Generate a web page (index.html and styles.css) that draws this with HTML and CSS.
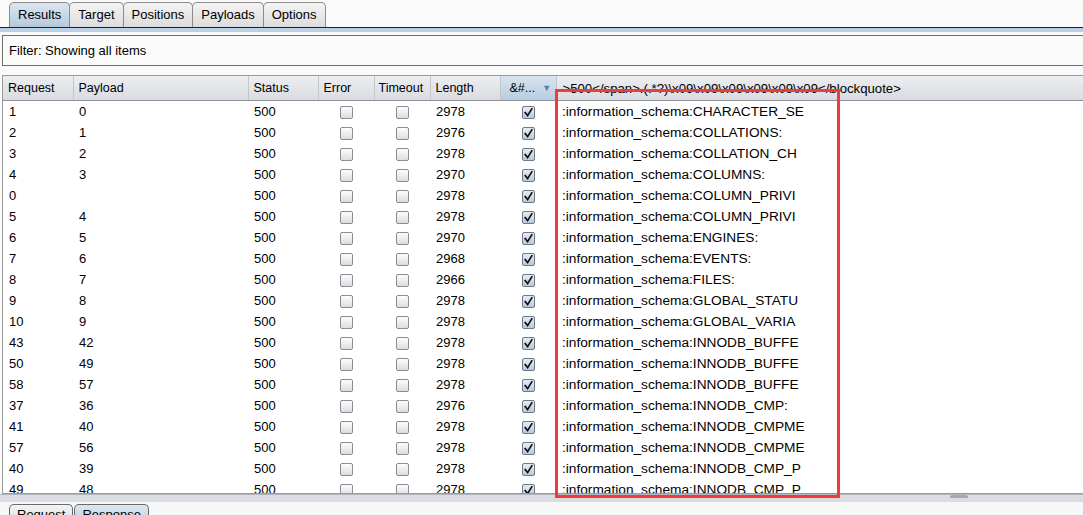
FILE: index.html
```html
<!DOCTYPE html>
<html>
<head>
<meta charset="utf-8">
<link rel="stylesheet" href="styles.css">
</head>
<body>
<div class="page">
  <div class="tabs">
    <div class="tab active">Results</div>
    <div class="tab">Target</div>
    <div class="tab">Positions</div>
    <div class="tab">Payloads</div>
    <div class="tab">Options</div>
  </div>
  <div class="band"></div>
  <div class="filter">Filter: Showing all items</div>
  <div class="table-wrap">
    <table class="grid">
      <colgroup>
        <col class="c-req"><col class="c-pay"><col class="c-status"><col class="c-err"><col class="c-to"><col class="c-len"><col class="c-ext"><col class="c-last">
      </colgroup>
      <thead>
        <tr>
          <th>Request</th><th>Payload</th><th>Status</th><th>Error</th><th class="to">Timeout</th><th>Length</th>
          <th class="sorted"><span>&amp;#...</span><span class="tri">&#9660;</span></th>
          <th class="last">&gt;500&lt;/span&gt;.(.*?)\x09\x09\x09\x09\x09\x09&lt;/blockquote&gt;</th>
        </tr>
      </thead>
      <tbody id="rows"></tbody>
    </table>
  </div>
  <div class="splitter"><div class="handle"></div></div>
  <div class="btabs">
    <div class="btab">Request</div>
    <div class="btab active">Response</div>
  </div>
  <div class="redbox"></div>
</div>
<script src="script.js"></script>
</body>
</html>
```

FILE: script.js
```js
var data = [
  ["1","0","2978","CHARACTER_SE"],
  ["2","1","2976","COLLATIONS:"],
  ["3","2","2978","COLLATION_CH"],
  ["4","3","2970","COLUMNS:"],
  ["0","","2978","COLUMN_PRIVI"],
  ["5","4","2978","COLUMN_PRIVI"],
  ["6","5","2970","ENGINES:"],
  ["7","6","2968","EVENTS:"],
  ["8","7","2966","FILES:"],
  ["9","8","2978","GLOBAL_STATU"],
  ["10","9","2978","GLOBAL_VARIA"],
  ["43","42","2978","INNODB_BUFFE"],
  ["50","49","2978","INNODB_BUFFE"],
  ["58","57","2978","INNODB_BUFFE"],
  ["37","36","2976","INNODB_CMP:"],
  ["41","40","2978","INNODB_CMPME"],
  ["57","56","2978","INNODB_CMPME"],
  ["40","39","2978","INNODB_CMP_P"],
  ["49","48","2978","INNODB_CMP_P"]
];
var box = '<span class="cb"></span>';
var chk = '<span class="cb on"><svg viewBox="0 0 13 13" width="13" height="13"><path d="M3.2 6.6 L5.6 9.6 L9.8 2.8" fill="none" stroke="#111" stroke-width="1.7" stroke-linecap="square"/></svg></span>';
var html = "";
data.forEach(function (r) {
  html += "<tr><td>" + r[0] + "</td><td>" + r[1] + "</td><td>500</td><td class='ctr'>" + box +
    "</td><td class='ctr'>" + box + "</td><td>" + r[2] + "</td><td class='ctr'>" + chk +
    "</td><td class='last'>:information_schema:" + r[3] + "</td></tr>";
});
document.getElementById("rows").innerHTML = html;
```

FILE: styles.css
```css
html, body {
  margin: 0;
  padding: 0;
  background: #fafafa;
  overflow: hidden;
}
.page {
  position: relative;
  width: 1083px;
  height: 515px;
  overflow: hidden;
  font-family: "Liberation Sans", Arial, sans-serif;
  font-size: 12px;
  color: #000;
}
.tabs {
  display: flex;
  height: 25px;
  padding: 2px 0 0 9px;
  border-bottom: 1px solid #222;
}
.tab {
  height: 24px;
  line-height: 24px;
  padding: 0 8px;
  border: 1px solid #8c8c8c;
  border-bottom: none;
  border-radius: 5px 5px 0 0;
  background: linear-gradient(#f4f4f4, #dcdcde);
  font-size: 13px;
  margin-right: -1px;
}
.tab.active {
  background: linear-gradient(#dce6f0, #b6cadc);
  padding: 0 8px;
}
.band {
  height: 4px;
  background: #bcd0e3;
}
.filter {
  margin: 3px 0 0 2px;
  height: 29px;
  line-height: 29px;
  border: 1px solid #6e6e6e;
  border-right: none;
  padding-left: 6px;
  background: #fbfbfb;
  font-size: 13px;
}
.table-wrap {
  margin: 9px 0 0 2px;
  height: 417px;
  border: 1px solid #999;
  border-right: none;
  overflow: hidden;
  background: #fff;
}
.grid {
  table-layout: fixed;
  border-collapse: collapse;
  width: 1640px;
}
.c-req { width: 70px; }
.c-pay { width: 175px; }
.c-status { width: 70px; }
.c-err { width: 56px; }
.c-to { width: 56px; }
.c-len { width: 70px; }
.c-ext { width: 56px; }
.c-last { width: 1087px; }
th {
  height: 24px;
  padding: 0 0 0 5px;
  text-align: left;
  font-weight: normal;
  font-size: 12.5px;
  white-space: nowrap;
  overflow: hidden;
  background: linear-gradient(#eceef1, #d9dbe0);
  border-right: 1px solid #c3c5cb;
  border-bottom: 1px solid #8f9098;
}
th.to { padding-left: 4px; }
th.sorted {
  background: linear-gradient(#d8e4ef, #b7cde0);
  padding-left: 9px;
}
th.sorted .tri {
  color: #5a7fa3;
  font-size: 9px;
  margin-left: 7px;
  vertical-align: 1px;
}
th.last {
  padding-left: 6px;
  font-size: 13.2px;
}
td {
  height: 21px;
  padding: 0 0 0 6px;
  white-space: nowrap;
  overflow: hidden;
  font-size: 13px;
  vertical-align: middle;
}
td.ctr {
  text-align: center;
  padding: 0;
}
td.last {
  padding-left: 6px;
  font-size: 13.7px;
}
.cb {
  display: inline-block;
  width: 11px;
  height: 11px;
  border: 1px solid #8a8c92;
  border-radius: 2px;
  background: linear-gradient(#fdfdfd, #dcdde0);
  vertical-align: middle;
  position: relative;
  top: 0;
}
.cb.on {
  background: linear-gradient(#e6edf4, #b9cadb);
  border-color: #6f7785;
}
.cb svg {
  position: absolute;
  left: -1px;
  top: -1px;
}
.splitter {
  height: 7px;
  background: #dadce2;
  border-top: 1px solid #b4b6be;
  display: flex;
  padding-left: 950px;
}
.handle {
  width: 18px;
  height: 3px;
  background: #a6a9b2;
  border-radius: 2px 2px 0 0;
}
.btabs {
  display: flex;
  padding: 2px 0 0 9px;
  background: #f7f7f7;
  height: 20px;
}
.btab {
  height: 20px;
  line-height: 20px;
  padding: 0 7px;
  border: 1px solid #6a6a6a;
  border-bottom: none;
  border-radius: 5px 5px 0 0;
  background: linear-gradient(#f4f4f4, #dcdcde);
  font-size: 13px;
  margin-right: 1px;
}
.btab.active {
  background: linear-gradient(#dce6f0, #bcd0e2);
}
.redbox {
  position: absolute;
  left: 555px;
  top: 89px;
  width: 279px;
  height: 403px;
  border: 3px solid #ee3b3b;
}
```
